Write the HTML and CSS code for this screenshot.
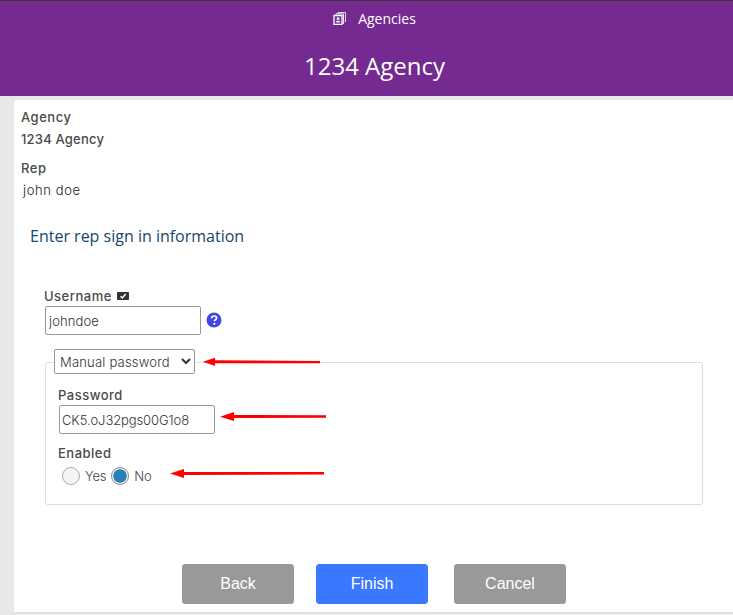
FILE: index.html
```html
<!DOCTYPE html>
<html lang="en">
<head>
<meta charset="utf-8">
<title>Agencies</title>
<link rel="stylesheet" href="styles.css">
</head>
<body>
<header class="banner">
  <div class="crumb">
    <svg class="crumb-icon" viewBox="0 0 13 13" width="13" height="13" aria-hidden="true">
      <path d="M5 1.500V.5h7.500v9h-1" fill="none" stroke="#fff" stroke-width=".8"/>
      <path d="M3 3V1.800h7.500v9.700H9.500" fill="none" stroke="#fff" stroke-width=".9"/>
      <path d="M1 3.500h8v9H1z" fill="none" stroke="#fff" stroke-width="1.300"/>
      <path d="M3.800 5.500h2.500v2.300H3.800zM3.300 8.800h3.500v1.700H3.300z" fill="#fff"/>
    </svg>
    <span>Agencies</span>
  </div>
  <h1 class="title">1234 Agency</h1>
</header>
<main class="card">
  <dl class="summary">
    <dt class="label">Agency</dt>
    <dd class="value value-strong">1234 Agency</dd>
    <dt class="label label-next">Rep</dt>
    <dd class="value value-light">john doe</dd>
  </dl>
  <h2 class="heading">Enter rep sign in information</h2>
  <form class="form">
    <div class="username">
      <label class="label label-user" for="user">Username
        <svg class="badge" viewBox="0 0 12 8" width="12" height="8" aria-hidden="true">
          <rect width="12" height="8" rx="1" fill="#333"/>
          <path d="M3.500 4.200l1.800 1.800 3.400-4" fill="none" stroke="#fff" stroke-width="1.400"/>
        </svg>
      </label>
      <div class="user-row">
        <input id="user" class="input input-user" type="text" value="johndoe">
        <svg class="help" viewBox="0 0 16 16" width="16" height="16" aria-hidden="true">
          <circle cx="8" cy="8" r="7.500" fill="#4545e0"/>
          <path d="M5.600 6.200C5.700 4.800 6.700 4 8.100 4c1.400 0 2.400.8 2.400 2 0 1-.6 1.500-1.300 2-.6.4-.8.7-.8 1.300" fill="none" stroke="#fff" stroke-width="1.700"/>
          <circle cx="8.300" cy="11.800" r="1.100" fill="#fff"/>
        </svg>
      </div>
    </div>
    <fieldset class="group">
      <legend class="legend">
        <select class="select">
          <option>Manual password</option>
        </select>
      </legend>
      <label class="label label-pass" for="pass">Password</label>
      <input id="pass" class="input input-pass" type="text" value="CK5.oJ32pgs00G1o8">
      <div class="label label-enabled">Enabled</div>
      <div class="radios">
        <input id="yes" class="radio" type="radio" name="enabled">
        <label class="radio-text" for="yes">Yes</label>
        <input id="no" class="radio radio-no" type="radio" name="enabled" checked>
        <label class="radio-text" for="no">No</label>
      </div>
    </fieldset>
    <div class="actions">
      <button class="btn" type="button">Back</button>
      <button class="btn btn-primary" type="button">Finish</button>
      <button class="btn btn-last" type="button">Cancel</button>
    </div>
  </form>
</main>
<svg class="arrows" width="733" height="615" viewBox="0 0 733 615" aria-hidden="true">
  <path d="M203 361.700L215 357.700V360.300L320 361V363.300L215 363.300V366Z" fill="#f00"/>
  <path d="M220 416.700L234 412V415L326 415.200V417.800L234 418V421Z" fill="#f00"/>
  <path d="M170 473.500L184 469V472L324 472V474.600L184 475V478Z" fill="#f00"/>
</svg>
</body>
</html>
```
FILE: styles.css
```css
* { box-sizing: border-box; }
html, body { margin: 0; padding: 0; }
body {
  position: relative;
  width: 733px;
  height: 615px;
  overflow: hidden;
  background: #e8e8e8;
  font-family: Inter, Lato, "Noto Sans", sans-serif;
  color: #3a3a3a;
}
.banner {
  height: 96px;
  background: #742a90;
  border-top: 1px solid #3a3a3a;
  color: #fff;
  font-family: "Open Sans", "Noto Sans", sans-serif;
  text-align: center;
  padding-left: 16px;
}
.crumb {
  display: flex;
  justify-content: center;
  align-items: center;
  gap: 12px;
  padding-top: 7px;
  height: 28px;
  font-size: 14px;
  line-height: 20px;
}
.title {
  margin: 20px 0 0;
  font-size: 24px;
  font-weight: 400;
  line-height: 33px;
}
.card {
  height: 512px;
  margin: 4px 0 0 14px;
  background: #fff;
  border-radius: 3px 0 0 0;
  padding: 8px 0 0 7px;
  box-shadow: 0 1px 1px #d8d8d8;
}
.summary { margin: 0; }
.label {
  display: block;
  font-size: 13px;
  line-height: 18px;
  font-weight: 500;
  color: #4a4a4a;
  letter-spacing: .5px;
}
.value {
  margin: 4px 0 0;
  font-size: 13px;
  line-height: 18px;
}
.value-strong { color: #4a4a4a; font-weight: 500; letter-spacing: .2px; }
.value-light { color: #222; padding-left: 2px; font-weight: 300; letter-spacing: .6px; }
.label-next { margin-top: 11px; }
.heading {
  margin: 26px 0 0 9px;
  font-family: "Open Sans", "Noto Sans", sans-serif;
  font-size: 16px;
  font-weight: 400;
  line-height: 22px;
  color: #17456b;
}
.form { margin: 0; }
.username { margin: 40px 0 0 23px; }
.label-user { display: flex; align-items: center; gap: 5px; }
.user-row { display: flex; align-items: center; gap: 5px; margin: 1px 0 0; }
.input {
  height: 29px;
  border: 1px solid #999;
  border-radius: 2px;
  background: #fff;
  font-family: Inter, Lato, "Noto Sans", sans-serif;
  font-size: 13px;
  font-weight: 300;
  color: #333;
  padding: 0 2px;
  outline: none;
}
.input-user { width: 156px; margin-left: 1px; padding-left: 3px; letter-spacing: .1px; }
.help { display: block; margin-top: -1px; }
.group {
  width: 658px;
  height: 156px;
  margin: 14px 0 0 24px;
  padding: 0 0 0 12px;
  border: 1px solid #ddd;
  border-radius: 3px;
  min-width: 0;
}
.legend { height: 27px; padding: 0; margin-left: -4px; }
.select {
  display: block;
  width: 141px;
  height: 25px;
  background: #fff;
  border: 1px solid #999;
  border-radius: 2px;
  font-family: Inter, Lato, "Noto Sans", sans-serif;
  font-size: 13px;
  font-weight: 300;
  letter-spacing: .2px;
  color: #333;
  padding: 0 0 0 1px;
}
.label-pass { margin-top: 10px; }
.input-pass { display: block; width: 156px; margin: 1px 0 0 1px; letter-spacing: -.1px; }
.label-enabled { margin-top: 10px; }
.radios { display: flex; align-items: center; margin-top: 5px; }
.radio {
  appearance: none;
  width: 18px;
  height: 18px;
  margin: 0 0 0 4px;
  border: 1px solid #aaa;
  border-radius: 50%;
  background: #f4f4f4;
}
.radio-no { margin-left: 5px; }
.radio:checked {
  background: radial-gradient(circle, #2a7fba 0 6.400px, #f4f4f4 7px);
  border-color: #888;
}
.radio-text { font-size: 13px; font-weight: 300; color: #444; margin-left: 5px; letter-spacing: -.2px; }
.actions {
  display: flex;
  gap: 22px;
  margin: 59px 0 0 161px;
}
.btn {
  width: 112px;
  height: 40px;
  border: 1px solid #999;
  border-radius: 3px;
  background: #999;
  color: #fff;
  font-family: "Liberation Sans", Arial, sans-serif;
  font-size: 16px;
}
.btn-primary { background: #3a78ff; border-color: #3a78ff; }
.btn-last { margin-left: 4px; }
.arrows { position: absolute; left: 0; top: 0; pointer-events: none; }
```
